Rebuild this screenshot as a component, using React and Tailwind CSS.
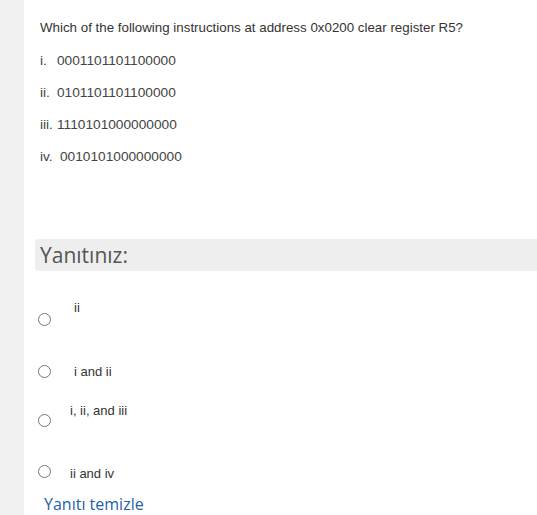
export default function App() {
  const satirlar = [
    ["i.", "0001101101100000", "w-[17px]"],
    ["ii.", "0101101101100000", "w-[17px]"],
    ["iii.", "1110101000000000", "w-[17px]"],
    ["iv.", "0010101000000000", "w-[20px]"],
  ];

  return (
    <div className="flex min-h-[515px] w-[537px] bg-white">
      <div className="w-[24px] shrink-0 bg-[#f0f0f0]" />
      <div className="flex-1 pl-[11px]">
        {/* soru metni */}
        <div className="pl-[5px] pt-[19px] font-['Liberation_Sans',Arial,sans-serif] text-[13.33px] text-[#333]">
          <p className="leading-[18px]">
            Which of the following instructions at address 0x0200 clear register R5?
          </p>
          <div className="mt-[15px] flex flex-col gap-[14px] text-[13.7px] text-[#444]">
            {satirlar.map(([no, bit, w]) => (
              <p key={no} className="flex leading-[18px]">
                <span className={w}>{no}</span>
                <span>{bit}</span>
              </p>
            ))}
          </div>
        </div>

        <div className="mt-[73px] h-[32px] rounded-l-[4px] bg-[#eeeeee] pl-[5px] font-['Open_Sans',sans-serif] text-[21px] leading-[32px] text-[#555]">
          Yanıtınız:
        </div>

        {/* seçenekler */}
        <div className="font-['Liberation_Sans',Arial,sans-serif] text-[13px] text-[#333]">
          <div className="flex h-[60px] items-start">
            <span className="ml-[3px] mt-[42px] h-[13px] w-[13px] shrink-0 rounded-full border-[1.5px] border-[#777]" />
            <span className="ml-[23px] mt-[30px] leading-[14px]">ii</span>
          </div>
          <div className="flex h-[60px] items-start">
            <span className="ml-[3px] mt-[34px] h-[13px] w-[13px] shrink-0 rounded-full border-[1.5px] border-[#777]" />
            <span className="ml-[23px] mt-[34px] leading-[14px]">i and ii</span>
          </div>
          <div className="flex h-[60px] items-start">
            <span className="ml-[3px] mt-[23px] h-[13px] w-[13px] shrink-0 rounded-full border-[1.5px] border-[#777]" />
            <span className="ml-[19px] mt-[13px] leading-[14px]">i, ii, and iii</span>
          </div>
          <div className="flex h-[36px] items-start">
            <span className="ml-[3px] mt-[14px] h-[13px] w-[13px] shrink-0 rounded-full border-[1.5px] border-[#777]" />
            <span className="ml-[19px] mt-[16px] leading-[14px]">ii and iv</span>
          </div>
        </div>

        <p className="ml-[9px] mt-[6px] font-['Open_Sans',sans-serif] text-[16px] leading-[22px] text-[#1f5fa8]">
          Yanıtı temizle
        </p>
      </div>
    </div>
  );
}
